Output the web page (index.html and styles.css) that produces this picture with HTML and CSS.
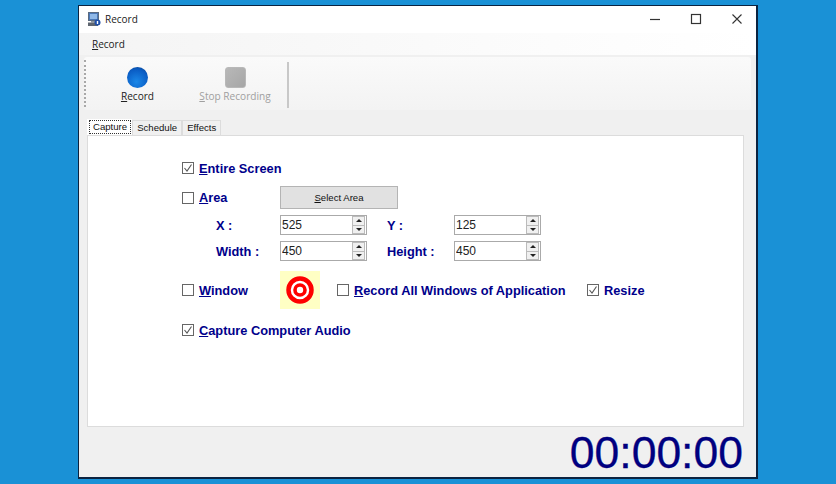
FILE: index.html
```html
<!DOCTYPE html>
<html lang="en">
<head>
    <meta charset="UTF-8">
    <title>Record</title>
    <link rel="stylesheet" href="styles.css">
</head>
<body>
    <div class="window">
        <div class="titlebar">
            <svg class="app-icon" width="15" height="15" viewBox="0 0 15 15">
                <rect x="1.5" y="0.5" width="10" height="8" fill="#4a78b8" stroke="#5a6a80"/>
                <rect x="3" y="2" width="7" height="5" fill="#8fb8e8"/>
                <rect x="4" y="9" width="5" height="1.5" fill="#8a94a0"/>
                <rect x="1" y="10.5" width="10" height="3.5" fill="#5f6670"/>
                <circle cx="10.5" cy="10.5" r="3" fill="#1f4fa8"/>
                <rect x="9.8" y="9" width="1.4" height="3" fill="#fff"/>
            </svg>
            <span class="title">Record</span>
            <div class="window-buttons">
                <svg width="14" height="14" viewBox="0 0 14 14"><path d="M2 7.5h10" stroke="#333" stroke-width="1.2"/></svg>
                <svg width="14" height="14" viewBox="0 0 14 14"><rect x="2.5" y="2.5" width="9" height="9" fill="none" stroke="#333" stroke-width="1.2"/></svg>
                <svg width="14" height="14" viewBox="0 0 14 14"><path d="M2.5 2.5l9 9M11.5 2.5l-9 9" stroke="#333" stroke-width="1.1"/></svg>
            </div>
        </div>

        <div class="menubar"><span class="menu-item"><u>R</u>ecord</span></div>

        <div class="toolbar">
            <div class="grip"></div>
            <div class="tool tool-record">
                <span class="ball"></span>
                <span><u>R</u>ecord</span>
            </div>
            <div class="tool tool-stop">
                <span class="stop"></span>
                <span><u>S</u>top Recording</span>
            </div>
            <div class="separator"></div>
        </div>

        <div class="tabs">
            <span class="tab active"><span class="focus">Capture</span></span>
            <span class="tab">Schedule</span>
            <span class="tab">Effects</span>
        </div>

        <div class="panel">
            <div class="row row-entire">
                <label class="check-label">
                    <span class="check"><svg width="10" height="10" viewBox="0 0 10 10"><path d="M1.5 5l2.5 3L8.5 1.5" fill="none" stroke="#555" stroke-width="1.1"/></svg></span>
                    <span><u>E</u>ntire Screen</span>
                </label>
            </div>

            <div class="row row-area">
                <label class="check-label col-first">
                    <span class="check"></span>
                    <span><u>A</u>rea</span>
                </label>
                <button class="select-btn"><u>S</u>elect Area</button>
            </div>

            <div class="row row-field">
                <span class="field-label">X :</span>
                <div class="spin"><input value="525"><span class="spin-btns"><i class="up"></i><i class="down"></i></span></div>
                <span class="field-label second">Y :</span>
                <div class="spin"><input value="125"><span class="spin-btns"><i class="up"></i><i class="down"></i></span></div>
            </div>

            <div class="row row-field">
                <span class="field-label">Width :</span>
                <div class="spin"><input value="450"><span class="spin-btns"><i class="up"></i><i class="down"></i></span></div>
                <span class="field-label second">Height :</span>
                <div class="spin"><input value="450"><span class="spin-btns"><i class="up"></i><i class="down"></i></span></div>
            </div>

            <div class="row row-window">
                <label class="check-label col-first">
                    <span class="check"></span>
                    <span><u>W</u>indow</span>
                </label>
                <div class="target">
                    <svg width="28" height="28" viewBox="0 0 28 28">
                        <circle cx="14" cy="14" r="11.5" fill="#fff" stroke="#f00" stroke-width="4.5"/>
                        <circle cx="14" cy="14" r="5" fill="#fff" stroke="#f00" stroke-width="3.6"/>
                    </svg>
                </div>
                <label class="check-label all-windows">
                    <span class="check"></span>
                    <span><u>R</u>ecord All Windows of Application</span>
                </label>
                <label class="check-label resize">
                    <span class="check"><svg width="10" height="10" viewBox="0 0 10 10"><path d="M1.5 5l2.5 3L8.5 1.5" fill="none" stroke="#555" stroke-width="1.1"/></svg></span>
                    <span>Resize</span>
                </label>
            </div>

            <div class="row row-audio">
                <label class="check-label">
                    <span class="check"><svg width="10" height="10" viewBox="0 0 10 10"><path d="M1.5 5l2.5 3L8.5 1.5" fill="none" stroke="#555" stroke-width="1.1"/></svg></span>
                    <span><u>C</u>apture Computer Audio</span>
                </label>
            </div>
        </div>

        <div class="timer">00:00:00</div>
    </div>
</body>
</html>
```

FILE: styles.css
```css
body {
    margin: 0;
    padding: 5px 0 0 78px;
    height: 484px;
    box-sizing: border-box;
    overflow: hidden;
    background-color: #1a91d6;
    font-family: "Liberation Sans", Arial, sans-serif;
}

.window {
    width: 680px;
    height: 474px;
    box-sizing: border-box;
    border: 1px solid #0b2340;
    border-width: 1px 2px 2px 1px;
    background-color: #f0f0f0;
    display: flex;
    flex-direction: column;
}

/* Title bar */
.titlebar {
    height: 27px;
    box-sizing: border-box;
    padding: 0 0 1px 8px;
    flex: none;
    background-color: #fff;
    display: flex;
    align-items: center;
}

.app-icon {
    margin-right: 3px;
}

.title {
    font-family: "Open Sans", sans-serif;
    font-size: 10px;
    color: #222;
}

.window-buttons {
    margin-left: auto;
    margin-right: 12px;
    display: flex;
    gap: 27px;
}

/* Menu */
.menubar {
    height: 22px;
    flex: none;
    background: linear-gradient(to right, #f4f4f4, #fbfbfb 60%, #fff);
    border-bottom: 2px solid #f0f0f0;
    padding-left: 13px;
    display: flex;
    align-items: center;
}

.menu-item {
    font-family: "Open Sans", sans-serif;
    font-size: 10px;
    color: #222;
}

/* Toolbar */
.toolbar {
    height: 53px;
    flex: none;
    margin-left: 5px;
    margin-right: 5px;
    background: linear-gradient(to bottom, #fafafa, #f3f3f3);
    border-radius: 3px;
    display: flex;
    align-items: stretch;
}

.grip {
    width: 0;
    margin: 3px 0 3px 0;
    border-left: 2px dotted #a8a8a8;
}

.tool {
    display: flex;
    flex-direction: column;
    align-items: center;
    font-family: "Open Sans", sans-serif;
    font-size: 10.1px;
    padding-top: 10px;
    gap: 1px;
}

.tool-record {
    width: 103px;
    color: #222;
}

.tool-stop {
    width: 92px;
    color: #a0a0a0;
}

.ball {
    width: 21px;
    height: 21px;
    border-radius: 50%;
    background: radial-gradient(circle at 45% 70%, #1a88e8, #0a5cc4 65%, #0d3f80);
}

.stop {
    width: 21px;
    height: 21px;
    border-radius: 3px;
    border: 1px solid #b8b8b8;
    box-sizing: border-box;
    background: linear-gradient(135deg, #b8b8b8, #a6a6a6);
}

.separator {
    width: 2px;
    margin: 5px 0 2px 6px;
    background-color: #c8c8c8;
}

/* Tabs */
.tabs {
    height: 16px;
    flex: none;
    margin-top: 9px;
    margin-left: 8px;
    display: flex;
    align-items: flex-end;
}

.tab {
    height: 15px;
    box-sizing: border-box;
    padding: 0 4px;
    border: 1px solid #dcdcdc;
    border-bottom: none;
    font-size: 9.6px;
    line-height: 14px;
    color: #111;
    background-color: #f0f0f0;
}

.tab.active {
    height: 16px;
    padding: 1px 1px 0 2px;
    background-color: #fff;
    border: none;
}

.focus {
    display: block;
    padding: 0 3px;
    border: 1px dotted #333;
    line-height: 12px;
    height: 14px;
    box-sizing: border-box;
}

/* Capture panel */
.panel {
    height: 292px;
    flex: none;
    margin-left: 8px;
    width: 657px;
    box-sizing: border-box;
    background-color: #fff;
    border: 1px solid #dcdcdc;
    padding-left: 94px;
}

.row {
    display: flex;
    align-items: center;
}

.row-entire {
    height: 16px;
    margin-top: 24px;
}

.row-area {
    height: 23px;
    margin-top: 10px;
}

.row-field {
    height: 20px;
    margin-top: 6px;
}

.row-window {
    height: 38px;
    margin-top: 10px;
}

.row-audio {
    height: 16px;
    margin-top: 13px;
}

.check-label {
    display: flex;
    align-items: center;
    gap: 5px;
    font-size: 12.8px;
    font-weight: bold;
    color: #00008b;
    white-space: nowrap;
}

.col-first {
    width: 98px;
}

.check {
    width: 12px;
    height: 12px;
    box-sizing: border-box;
    border: 1px solid #666;
    background-color: #fff;
    display: block;
    overflow: hidden;
}

.check svg {
    display: block;
}

.select-btn {
    width: 118px;
    height: 23px;
    padding: 0;
    background-color: #e1e1e1;
    border: 1px solid #b4b4b4;
    font-family: "Liberation Sans", Arial, sans-serif;
    font-size: 9.6px;
    color: #111;
}

.field-label {
    width: 64px;
    padding-left: 34px;
    font-size: 12.8px;
    font-weight: bold;
    color: #00008b;
    white-space: nowrap;
}

.field-label.second {
    width: 67px;
    padding-left: 20px;
}

.spin {
    width: 87px;
    height: 20px;
    box-sizing: border-box;
    border: 1px solid #aaa;
    background-color: #fff;
    display: flex;
    align-items: center;
}

.spin input {
    width: 70px;
    border: none;
    outline: none;
    padding: 0 0 0 1px;
    font-family: "Liberation Sans", Arial, sans-serif;
    font-size: 12px;
    color: #222;
    background: none;
}

.spin-btns {
    width: 13px;
    margin-left: auto;
    margin-right: 1px;
    height: 16px;
    display: flex;
    flex-direction: column;
    gap: 1px;
    background-color: #bbb;
    border: 1px solid #bbb;
}

.spin-btns i {
    flex: 1;
    background-color: #f0f0f0;
    display: flex;
    align-items: center;
    justify-content: center;
}

.spin-btns i::before {
    content: "";
    border-left: 3px solid transparent;
    border-right: 3px solid transparent;
}

.spin-btns .up::before {
    border-bottom: 3px solid #222;
}

.spin-btns .down::before {
    border-top: 3px solid #222;
}

.target {
    width: 40px;
    height: 38px;
    background-color: #ffffc4;
    display: flex;
    align-items: center;
    justify-content: center;
}

.target svg {
    display: block;
}

.all-windows {
    margin-left: 17px;
    width: 234px;
}

.resize {
    margin-left: 16px;
}

/* Timer */
.timer {
    flex: 1;
    text-align: right;
    padding-right: 13px;
    font-size: 44.5px;
    line-height: 52px;
    color: #000080;
    -webkit-text-stroke: 0.3px #000080;
}
```
